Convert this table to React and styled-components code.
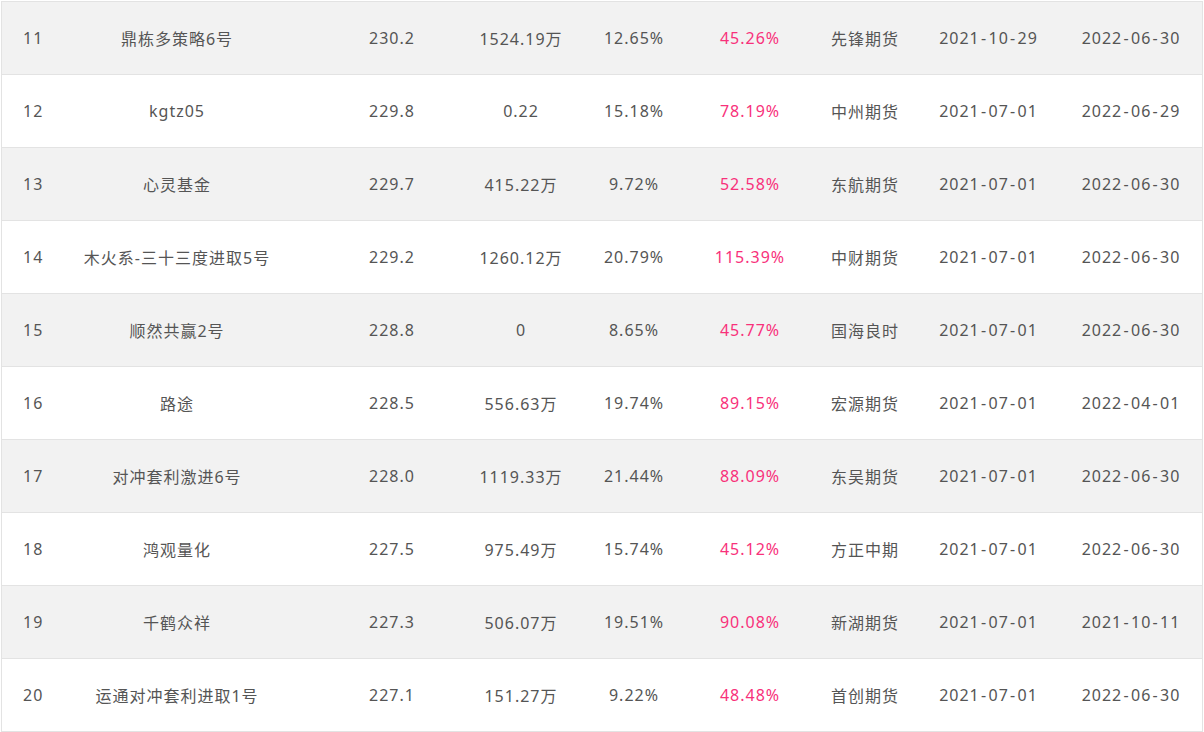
import React from 'react';
import styled, { createGlobalStyle } from 'styled-components';

const GlobalStyle = createGlobalStyle`
  html, body {
    margin: 0;
    padding: 0;
    background: #fff;
  }
  body {
    font-family: "Noto Sans", "Noto Sans CJK SC", sans-serif;
  }
`;

const Wrap = styled.div`
  padding: 1px 0 0 1px;
`;

const Table = styled.div`
  width: 1200px;
  border: 1px solid #e3e3e3;
  border-bottom: none;
`;

const Row = styled.div`
  display: grid;
  grid-template-columns: 29px 292px 138px 120px 106px 126px 104px 143px 142px;
  height: 72px;
  border-bottom: 1px solid #e3e3e3;
  background: ${(p) => (p.$striped ? '#f2f2f2' : '#fff')};
`;

const Cell = styled.div`
  display: flex;
  align-items: center;
  justify-content: ${(p) => (p.$start ? 'flex-start' : 'center')};
  padding-left: ${(p) => (p.$start ? '21px' : '0')};
  white-space: nowrap;
  font-size: 16px;
  letter-spacing: 1px;
  color: ${(p) => (p.$accent ? '#f8317b' : '#555')};
`;

// the hyphen in the dates sits a little wider than Noto's
const Dash = styled.span`
  padding: 0 1.3px;
`;

const DateText = ({ value }) => {
  const parts = value.split('-');
  return parts.map((p, i) => (
    <React.Fragment key={i}>
      {i > 0 && <Dash>-</Dash>}
      {p}
    </React.Fragment>
  ));
};

const rows = [
  ['11', '鼎栋多策略6号', '230.2', '1524.19万', '12.65%', '45.26%', '先锋期货', '2021-10-29', '2022-06-30'],
  ['12', 'kgtz05', '229.8', '0.22', '15.18%', '78.19%', '中州期货', '2021-07-01', '2022-06-29'],
  ['13', '心灵基金', '229.7', '415.22万', '9.72%', '52.58%', '东航期货', '2021-07-01', '2022-06-30'],
  ['14', '木火系-三十三度进取5号', '229.2', '1260.12万', '20.79%', '115.39%', '中财期货', '2021-07-01', '2022-06-30'],
  ['15', '顺然共赢2号', '228.8', '0', '8.65%', '45.77%', '国海良时', '2021-07-01', '2022-06-30'],
  ['16', '路途', '228.5', '556.63万', '19.74%', '89.15%', '宏源期货', '2021-07-01', '2022-04-01'],
  ['17', '对冲套利激进6号', '228.0', '1119.33万', '21.44%', '88.09%', '东吴期货', '2021-07-01', '2022-06-30'],
  ['18', '鸿观量化', '227.5', '975.49万', '15.74%', '45.12%', '方正中期', '2021-07-01', '2022-06-30'],
  ['19', '千鹤众祥', '227.3', '506.07万', '19.51%', '90.08%', '新湖期货', '2021-07-01', '2021-10-11'],
  ['20', '运通对冲套利进取1号', '227.1', '151.27万', '9.22%', '48.48%', '首创期货', '2021-07-01', '2022-06-30'],
];

const App = () => {
  return (
    <Wrap>
      <GlobalStyle />
      <Table>
        {rows.map((r, i) => (
          <Row key={r[0]} $striped={i % 2 === 0}>
            {r.map((v, j) => (
              <Cell key={j} $start={j === 0} $accent={j === 5}>
                {j >= 7 ? <DateText value={v} /> : v}
              </Cell>
            ))}
          </Row>
        ))}
      </Table>
    </Wrap>
  );
};

export default App;
